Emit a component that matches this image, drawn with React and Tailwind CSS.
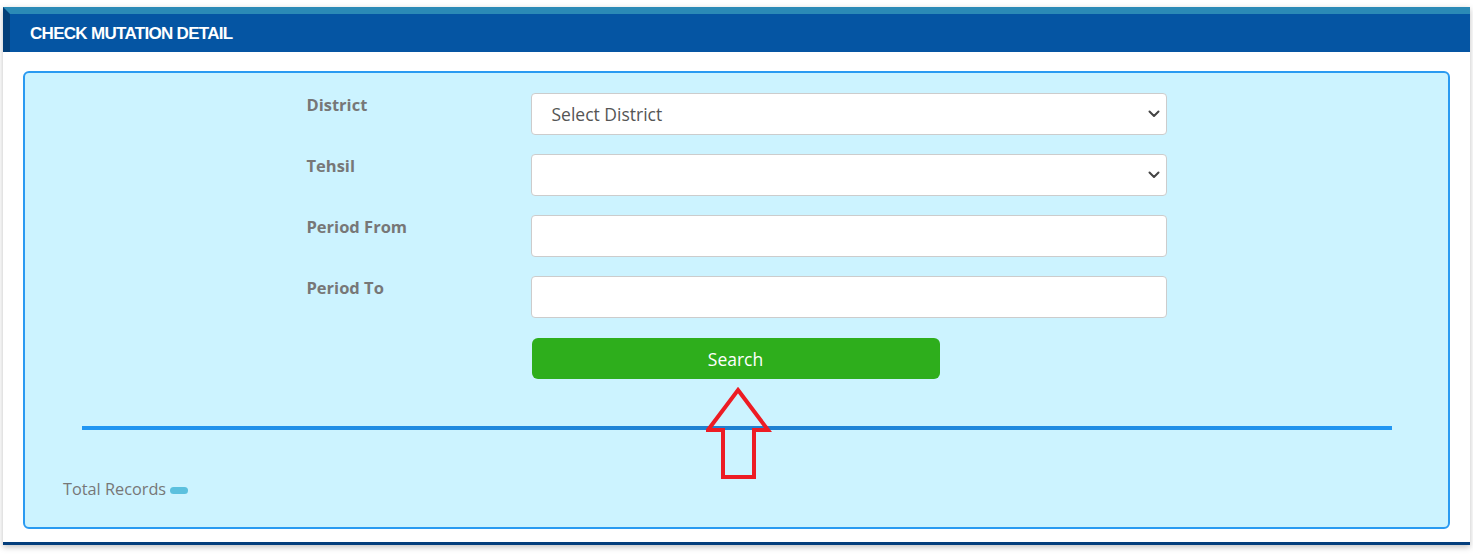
import React from "react";

function Chevron() {
  return (
    <svg width="12" height="8" viewBox="0 0 12 8" className="absolute right-[6px] top-1/2 -translate-y-1/2 pointer-events-none">
      <path d="M1.5 1.5 L6 6 L10.5 1.5" fill="none" stroke="#444" strokeWidth="2" strokeLinecap="round" strokeLinejoin="round" />
    </svg>
  );
}

function Row({ label, children }) {
  return (
    <div className="flex items-start mb-[19px]">
      <div className="w-[224px] text-[16.5px] leading-[24px] font-bold text-[#777]">{label}</div>
      <div className="w-[636px] relative">{children}</div>
    </div>
  );
}

function SelectBox({ text }) {
  return (
    <div className="relative h-[42px] w-full bg-white border border-[#ccc] rounded-[4px] flex items-center pl-[20px] text-[17.5px] text-[#555]">
      <span className="leading-[24px]">{text}</span>
      <Chevron />
    </div>
  );
}

function InputBox() {
  return <div className="h-[42px] w-full bg-white border border-[#ccc] rounded-[4px]" />;
}

export default function App() {
  return (
    <div className="min-h-[556px] bg-white pt-[7px]" style={{ fontFamily: '"Open Sans", sans-serif' }}>
      <div className="ml-[3px] w-[1467px] shadow-[0_2px_6px_rgba(0,0,0,0.25)] bg-white border-b-[3px] border-b-[#043e7c]">
        <div className="h-[45px] border-t-[7px] border-t-[#2b8ab6] border-l-[7px] border-l-[#033f78] bg-[#0555a3] flex items-center pl-[20px]">
          <span
            className="text-white font-bold text-[17px] tracking-[-0.7px] leading-none"
            style={{ fontFamily: '"Liberation Sans", Arial, sans-serif' }}
          >
            CHECK MUTATION DETAIL
          </span>
        </div>
        <div className="pt-[19px] pb-[13px] px-[20px]">
          <div className="relative bg-[#ccf3ff] border-2 border-[#2a9af1] rounded-[6px] pt-[20px] h-[458px]">
            <div className="w-[860px] mx-auto">
              <Row label="District">
                <SelectBox text="Select District" />
              </Row>
              <Row label="Tehsil">
                <SelectBox text="" />
              </Row>
              <Row label="Period From">
                <InputBox />
              </Row>
              <Row label="Period To">
                <InputBox />
              </Row>
              <div className="flex pl-[225px] pt-[1px]">
                <button className="w-[408px] h-[41px] bg-[#2eae1c] rounded-[6px] text-white text-[17.5px] leading-[24px]">
                  Search
                </button>
              </div>
            </div>
            <div className="mt-[47px] ml-[57px] mr-[56px] h-[4px] bg-gradient-to-r from-[#2196f3] via-[#1e7fd0] to-[#2196f3]" />
            <div className="mt-[47px] pl-[38px] flex items-center text-[16.3px] leading-[24px] text-[#777]">
              <span>Total Records</span>
              <span className="ml-[4px] mt-[2px] inline-block w-[18px] h-[7px] rounded-full bg-[#5bc0de]" />
            </div>
            <svg
              className="absolute left-[681px] top-[312px]"
              width="66"
              height="96"
              viewBox="0 0 66 96"
            >
              <polygon
                points="32,5 62,45 48,45 48,92 17,92 17,45 2,45"
                fill="none"
                stroke="#ed1c24"
                strokeWidth="4"
                strokeLinejoin="miter"
              />
            </svg>
          </div>
        </div>
      </div>
    </div>
  );
}
